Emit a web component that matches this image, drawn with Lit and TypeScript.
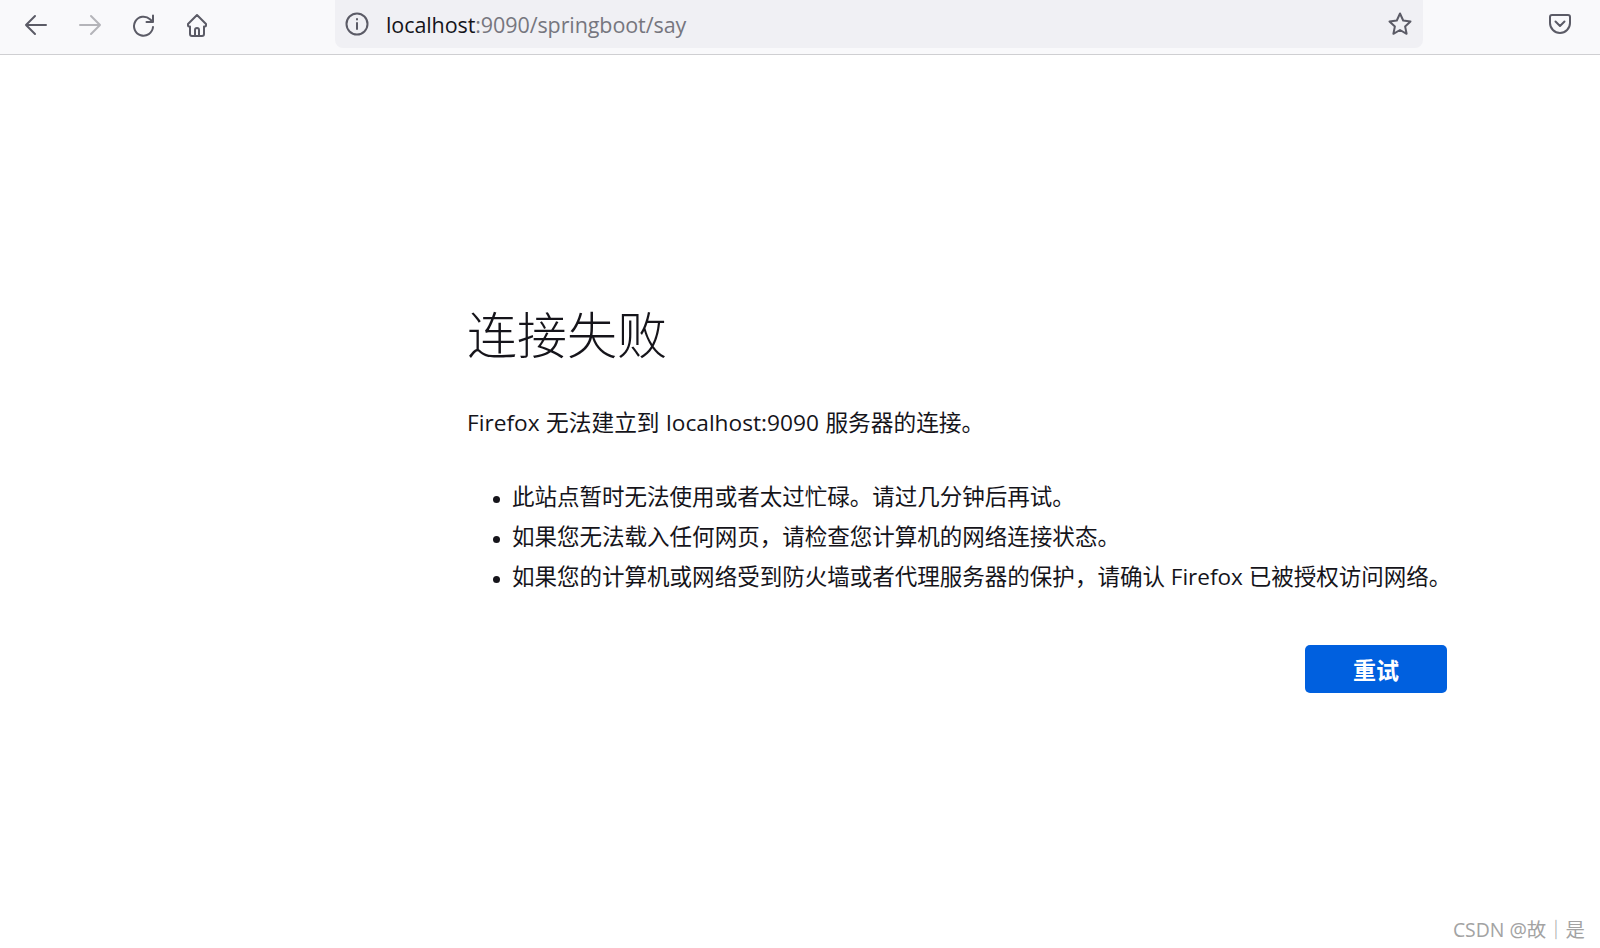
import { LitElement, html, css } from "lit";
import { customElement } from "lit/decorators.js";

@customElement("app-root")
export class AppRoot extends LitElement {
  static styles = css`
    :host {
      display: flex;
      flex-direction: column;
      position: relative;
      height: 948px;
      overflow: hidden;
      background: #fff;
      font-family: "Open Sans", "Noto Sans CJK SC", sans-serif;
      color: #15141a;
    }
    .toolbar {
      display: flex;
      align-items: flex-start;
      height: 55px;
      flex: none;
      box-sizing: border-box;
      background: #f9f9fb;
      border-bottom: 1px solid #cfcfd2;
    }
    .nav {
      display: flex;
      align-items: center;
      height: 49px;
      width: 335px;
      flex: none;
      padding-left: 24px;
      box-sizing: border-box;
      gap: 30px;
    }
    svg {
      width: 24px;
      height: 24px;
      flex: none;
      fill: none;
      stroke: #5b5b66;
      stroke-width: 2;
      stroke-linecap: round;
      stroke-linejoin: round;
    }
    .nav svg.off {
      stroke: #b4b4b9;
    }
    .nav svg.home {
      margin-left: -1px;
    }
    .url {
      display: flex;
      align-items: center;
      width: 1088px;
      height: 48px;
      flex: none;
      box-sizing: border-box;
      padding: 0 11px 0 10px;
      background: #f0f0f4;
      border-radius: 0 0 8px 8px;
    }
    .addr {
      flex: 1;
      margin-left: 17px;
      font-size: 21.5px;
      letter-spacing: -0.09px;
      color: #76767e;
    }
    .addr b {
      font-weight: 400;
      color: #15141a;
    }
    .pocket {
      margin: 12px 0 0 125px;
    }
    main {
      width: 980px;
      margin-left: 467px;
      padding-top: 244px;
      box-sizing: border-box;
    }
    h1 {
      margin: 0;
      font-size: 50px;
      font-weight: 300;
      line-height: 72px;
      color: #15141a;
    }
    p {
      margin: 32px 0 0;
      font-size: 22.7px;
      word-spacing: 0.6px;
      line-height: 40px;
      color: #15141a;
    }
    ul {
      margin: 34px 0 0;
      padding: 0 0 0 45px;
      font-size: 22.52px;
      line-height: 40px;
      white-space: nowrap;
      list-style: none;
    }
    li::before {
      content: "";
      display: inline-block;
      width: 7px;
      height: 7px;
      margin-left: -19px;
      margin-right: 12px;
      border-radius: 50%;
      background: #15141a;
      vertical-align: 2px;
    }
    .actions {
      display: flex;
      justify-content: flex-end;
      margin-top: 48px;
    }
    button {
      width: 142px;
      height: 48px;
      border: none;
      border-radius: 5px;
      background: #0060df;
      color: #fff;
      font: 700 23px "Open Sans", "Noto Sans CJK SC", sans-serif;
    }
    .mark {
      position: absolute;
      right: 15px;
      bottom: 5px;
      font-size: 19.4px;
      line-height: 26px;
      color: #a3a3a3;
    }
  `;

  render() {
    return html`
      <div class="toolbar">
        <div class="nav">
          <svg viewBox="0 0 24 24"><path d="M22 12H2M11 3l-9 9 9 9" /></svg>
          <svg class="off" viewBox="0 0 24 24"><path d="M2 12h20M13 3l9 9-9 9" /></svg>
          <svg viewBox="0 0 24 24"><path d="M21 14a9.500 9.500 0 1 1-3-7.800L21 9M21 2.500V9h-6.500" /></svg>
          <svg class="home" viewBox="0 0 24 24"><path d="M3 11l9-9 9 9v1.500a1 1 0 0 1-1 1h-1V21a2 2 0 0 1-2 2H7a2 2 0 0 1-2-2v-7.500H4a1 1 0 0 1-1-1zM10 23v-6a2 2 0 0 1 4 0v6" /></svg>
        </div>
        <div class="url">
          <svg viewBox="0 0 24 24">
            <circle cx="12" cy="12" r="10.500" />
            <path d="M12 11v6M12 7v.5" />
          </svg>
          <span class="addr"><b>localhost</b>:9090/springboot/say</span>
          <svg viewBox="0 0 24 24"><path d="M12 1.500l3.200 7 7.300.9-5.400 5 1.500 7.400L12 18l-6.600 3.800 1.500-7.400-5.400-5 7.300-.9z" /></svg>
        </div>
        <svg class="pocket" viewBox="0 0 24 24">
          <path d="M4 3h16a2 2 0 0 1 2 2v6a10 10 0 0 1-20 0V5a2 2 0 0 1 2-2zM7.500 9.500L12 14l4.500-4.500" />
        </svg>
      </div>
      <main>
        <h1>连接失败</h1>
        <p>Firefox 无法建立到 localhost:9090 服务器的连接。</p>
        <ul>
          <li>此站点暂时无法使用或者太过忙碌。请过几分钟后再试。</li>
          <li>如果您无法载入任何网页，请检查您计算机的网络连接状态。</li>
          <li>如果您的计算机或网络受到防火墙或者代理服务器的保护，请确认 Firefox 已被授权访问网络。</li>
        </ul>
        <div class="actions"><button>重试</button></div>
      </main>
      <div class="mark">CSDN @故｜是</div>
    `;
  }
}
